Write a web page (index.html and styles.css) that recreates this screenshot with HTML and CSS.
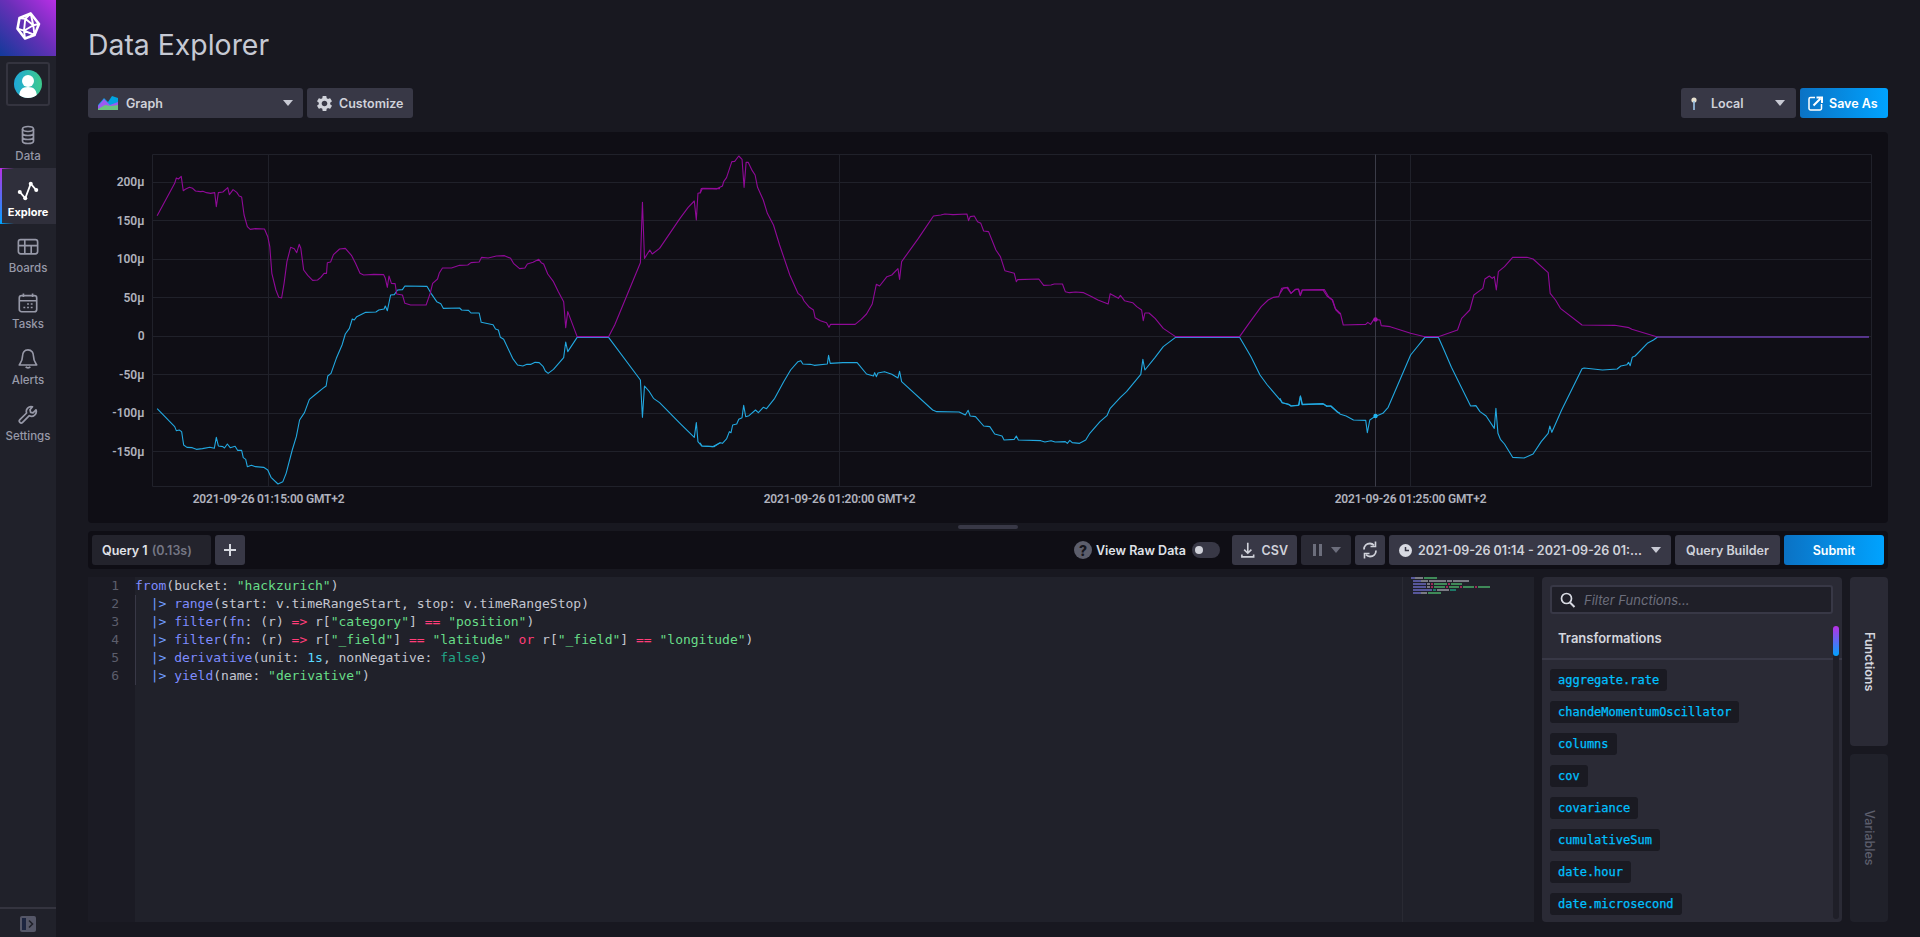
FILE: index.html
```html
<!DOCTYPE html>
<html lang="en">
<head>
<meta charset="utf-8">
<title>Data Explorer</title>
<link rel="stylesheet" href="styles.css">
</head>
<body>
<nav class="sidebar">
  <div class="logo">
    <svg class="logo-mark" width="36" height="36" viewBox="0 0 36 36" fill="none" stroke="#fff" stroke-width="2" stroke-linejoin="round"><path d="M9.500 10 20.700 5.500 29 16 24.500 27 15 30.500 7.500 20.700Z" stroke-width="2.600"/><path d="M15.300 10.700 23.300 17.300 14 22.700ZM9.500 10 15.300 10.700 20.700 5.500 23.300 17.300 29 16M23.300 17.300 24.500 27 14 22.700 15 30.500M14 22.700 7.500 20.700" stroke-width="1.900"/></svg>
  </div>
  <div class="avatar-box">
    <div class="avatar"><svg width="28" height="28" viewBox="0 0 28 28"><circle cx="14" cy="11" r="6" fill="#fff"/><path d="M5 28c0-8 3-11 9-11s9 3 9 11Z" fill="#fff"/></svg></div>
  </div>
  <a class="nav-item">
    <svg class="nav-icon" viewBox="0 0 20 20" fill="none" stroke="currentColor" stroke-width="1.700"><ellipse cx="10" cy="4" rx="5.500" ry="2.500"/><path d="M4.500 4v12c0 1.400 2.500 2.500 5.500 2.500s5.500-1.100 5.500-2.500V4M4.500 8c0 1.400 2.500 2.500 5.500 2.500S15.500 9.400 15.500 8M4.500 12c0 1.400 2.500 2.500 5.500 2.500s5.500-1.100 5.500-2.500"/></svg>
    <span>Data</span>
  </a>
  <a class="nav-item active">
    <svg class="nav-icon big" viewBox="0 0 24 24" fill="none" stroke="#fff" stroke-width="2"><path d="M3 13 9 20 15 4 21 11"/><g fill="#fff" stroke="none"><circle cx="3" cy="13" r="2.200"/><circle cx="9" cy="20" r="2.200"/><circle cx="15" cy="4" r="2.200"/><circle cx="21" cy="11" r="2.200"/></g></svg>
    <span>Explore</span>
  </a>
  <a class="nav-item">
    <svg class="nav-icon big" viewBox="0 0 24 24" fill="none" stroke="currentColor" stroke-width="1.800"><rect x="1.500" y="4" width="21" height="15.500" rx="2.500"/><path d="M1.500 10.500h21M8.500 4v15.500M15.500 10.500v9"/></svg>
    <span>Boards</span>
  </a>
  <a class="nav-item">
    <svg class="nav-icon big" viewBox="0 0 24 24" fill="none" stroke="currentColor" stroke-width="1.800"><rect x="2.500" y="4" width="19" height="17.500" rx="2.500"/><path d="M2.500 9.500h19M7 1.500v4M17 1.500v4"/><path d="M11 13h2M15 13h2M7 17h2M11 17h2M15 17h2" stroke-width="1.600"/></svg>
    <span>Tasks</span>
  </a>
  <a class="nav-item">
    <svg class="nav-icon big" viewBox="0 0 24 24" fill="none" stroke="currentColor" stroke-width="1.800"><path d="M12 2c-4 0-6 3.200-6 7 0 5-2 7-3.500 9.500h19C20 16 18 14 18 9c0-3.800-2-7-6-7Z" stroke-linejoin="round"/><path d="M9.500 20.500a2.800 2.200 0 0 0 5 0"/></svg>
    <span>Alerts</span>
  </a>
  <a class="nav-item">
    <svg class="nav-icon" viewBox="0 0 20 20" fill="none" stroke="currentColor" stroke-width="1.700" stroke-linejoin="round"><path d="M14.500 1.800A4.800 4.800 0 0 0 8.600 8L1.900 14.700a1.900 1.900 0 0 0 2.700 2.700L11.300 10.700A4.800 4.800 0 0 0 18 4.800L15 7.800 12.600 7.300 12 4.800Z"/></svg>
    <span>Settings</span>
  </a>
  <div class="sidebar-foot">
    <svg width="16" height="16" viewBox="0 0 16 16"><rect width="16" height="16" rx="2" fill="#555768"/><rect x="2" y="2" width="4" height="12" fill="#1c2540"/><path d="M9 4.500 12.500 8 9 11.500" fill="none" stroke="#20212a" stroke-width="1.600"/></svg>
  </div>
</nav>

<main class="main">
  <header class="page-header"><h1 class="title">Data Explorer</h1></header>

  <div class="toolbar">
    <div class="btn graph-select">
      <svg width="20" height="14" viewBox="0 0 20 14"><path d="M0 9 6 2 10 6 14 0 20 2V14H0Z" fill="#00a3e0"/><path d="M0 10 6 3 12 9 20 6V14H0Z" fill="#9c5bf0"/><path d="M0 13 7 9 13 10 20 9V14H0Z" fill="#6ac47f"/></svg>
      <span class="grow">Graph</span>
      <i class="caret"></i>
    </div>
    <div class="btn customize">
      <svg width="19" height="19" viewBox="0 0 24 24" fill="currentColor"><path d="M19.140 12.940c.04-.3.06-.61.06-.94 0-.32-.02-.64-.07-.94l2.030-1.580a.49.49 0 0 0 .12-.61l-1.920-3.320a.488.488 0 0 0-.59-.22l-2.390.96c-.5-.38-1.030-.7-1.620-.94l-.36-2.540a.484.484 0 0 0-.48-.41h-3.840c-.24 0-.43.17-.47.41l-.36 2.540c-.59.24-1.130.57-1.620.94l-2.390-.96c-.22-.08-.47 0-.59.22L2.740 8.870c-.12.21-.08.47.12.61l2.030 1.580c-.05.3-.09.63-.09.94s.02.64.07.94l-2.030 1.580a.49.49 0 0 0-.12.61l1.920 3.320c.12.22.37.29.59.22l2.390-.96c.5.38 1.030.7 1.620.94l.36 2.540c.05.24.24.41.48.41h3.840c.24 0 .44-.17.47-.41l.36-2.540c.59-.24 1.130-.56 1.620-.94l2.390.96c.22.08.47 0 .59-.22l1.920-3.320c.12-.22.07-.47-.12-.61l-2.010-1.580zM12 15.600c-1.980 0-3.600-1.620-3.600-3.600s1.620-3.600 3.600-3.600 3.600 1.620 3.600 3.600-1.620 3.600-3.600 3.600z"/></svg>
      <span>Customize</span>
    </div>
    <div class="spacer"></div>
    <div class="btn local">
      <svg width="6" height="13" viewBox="0 0 6 13"><circle cx="3" cy="3" r="2.600" fill="#e8e2d0"/><rect x="2.200" y="4" width="1.600" height="9" fill="#9cc4e8"/></svg>
      <span class="grow">Local</span>
      <i class="caret"></i>
    </div>
    <div class="btn primary save-as">
      <svg width="15" height="15" viewBox="0 0 15 15" fill="none" stroke="#fff" stroke-width="1.500"><path d="M7 1.500H2.500a1.500 1.500 0 0 0-1.500 1.500v9.500a1.500 1.500 0 0 0 1.500 1.500H12a1.500 1.500 0 0 0 1.500-1.500V8"/><path d="M5.500 9.500 12.500 2.500M8.500 1.500h5.500v5.500" stroke-width="2"/></svg>
      <span>Save As</span>
    </div>
  </div>

  <section class="chart-panel">
    <svg class="chart" width="1800" height="391" viewBox="0 0 1800 391">
      <g class="grid">
        <path d="M64.500 22.500H1783.500V354.500H64.500Z"/>
        <path d="M64.500 50.500H1783.500M64.500 88.500H1783.500M64.500 127.500H1783.500M64.500 165.500H1783.500M64.500 204.500H1783.500M64.500 242.500H1783.500M64.500 281.500H1783.500M64.500 319.500H1783.500"/>
        <path d="M180.500 22.500V354.500M751.500 22.500V354.500M1322.500 22.500V354.500"/>
      </g>
      <path class="crosshair" d="M1287.500 22.500V354.500"/>
      <g class="ylabels">
        <text x="56.500" y="50">200µ</text>
        <text x="56.500" y="88.500">150µ</text>
        <text x="56.500" y="127">100µ</text>
        <text x="56.500" y="165.500">50µ</text>
        <text x="56.500" y="204">0</text>
        <text x="56.500" y="242.500">-50µ</text>
        <text x="56.500" y="281">-100µ</text>
        <text x="56.500" y="319.500">-150µ</text>
      </g>
      <g class="xlabels">
        <text x="180.500" y="367">2021-09-26 01:15:00 GMT+2</text>
        <text x="751.500" y="367">2021-09-26 01:20:00 GMT+2</text>
        <text x="1322.500" y="367">2021-09-26 01:25:00 GMT+2</text>
      </g>
      <g class="series-c">
        <path transform="translate(-8,-2) scale(.40816,.33333)" d="M189 836 232 890 236 902 243 900 249 905 254 945 262 952 275 953 285 958 300 956 318 952 329 955 334 922 339 948 350 950 354 954 361 942 368 953 380 949 386 961 396 961 400 983 406 988 410 1010 420 1006 430 1010 450 1012 460 1020 468 1042 485 1062 497 1055 505 1030 520 960 530 920 538 870 550 848 562 808 575 795 595 775 603 768 607 738 615 730 628 685 642 645 650 612 660 595 667 567 672 570 678 560 700 547 725 546 732 540 745 537 748 528 753 542 761 495 770 494 778 480 790 479 796 468 850 469 860 490 874 515 884 521 890 535 930 534 935 540 952 541 958 549 978 549 983 577 1012 584 1018 597 1025 600 1030 622 1038 628 1060 685 1072 705 1085 708 1095 703 1105 703 1115 697 1125 698 1135 710 1140 723 1147 730 1160 718 1185 683 1190 636 1195 665 1218 622 1295 622 1373 750 1378 862 1383 768 1395 785 1405 805 1420 818 1470 880 1505 922 1510 878 1514 935 1523 948 1550 950 1568 938"/>
        <path transform="translate(612,-2) scale(.40816,.33333)" d="M0 938 5 948 35 950 50 938 55 940 65 927 72 905 76 908 80 885 90 882 95 868 103 863 107 826 112 860 120 857 136 840 143 848 155 832 163 836 183 805 205 755 222 720 240 695 247 692 252 702 270 703 280 706 312 702 315 676 319 700 350 698 385 698 408 732 425 738 428 728 432 740 436 729 452 725 470 733 485 744 489 724 494 755 570 840 580 845 635 846 650 855 657 841 662 858 675 860 695 888 710 890 722 912 740 918 745 930 770 928 775 918 780 930 835 932 845 936 860 932 870 936 895 935 900 940 906 931 912 938 930 940 945 930 955 910 980 875 997 857 1005 835 1030 802 1045 785 1080 733 1085 688 1090 720 1115 682 1135 650 1165 622 1322 622 1350 680 1372 735 1390 765 1427 818 1445 825 1448 828 1466 826 1471 798 1475 824 1528 822 1535 829 1545 828 1560 845 1568 850"/>
        <path transform="translate(1192,-2) scale(.40816,.33333)" d="M0 805 5 818 20 822 27 828 47 825 50 798 55 823 105 821 115 828 125 828 148 853 162 858 180 870 210 871 214 908 220 870 232 860 252 850 265 832 285 775 320 675 355 622 388 622 400 655 420 712 467 828 480 827 490 845 505 858 525 895 529 835 534 910 540 928 550 942 570 982 598 984 620 972 640 935 657 910 661 888 666 907 690 840 740 716 745 714 790 720 826 717 835 708 850 704 854 697 858 707 863 682 870 678 900 640 915 630 925 621 1443 621"/>
      </g>
      <g class="series-p">
        <path transform="translate(-8,-2) scale(.40816,.33333)" d="M189 257 232 160 236 144 241 147 248 139 253 182 258 178 268 172 276 175 283 183 295 185 301 184 310 188 320 190 330 188 334 230 339 188 350 186 362 173 366 194 375 179 384 187 390 198 396 201 402 255 410 290 417 298 430 296 452 297 460 320 465 350 470 430 480 480 487 502 494 504 500 460 507 395 516 352 525 356 531 368 537 343 541 355 548 420 558 436 570 451 582 450 590 442 598 430 604 430 606 398 614 396 621 374 636 357 650 355 665 376 675 400 686 430 695 435 720 433 744 434 748 445 753 472 757 438 763 460 772 461 776 492 790 495 796 520 810 525 848 525 858 490 864 460 876 447 880 430 888 414 910 414 930 406 950 405 958 398 978 396 984 382 1000 384 1020 378 1040 377 1055 385 1062 400 1077 416 1090 414 1096 402 1110 397 1124 388 1130 398 1136 402 1146 432 1160 455 1172 485 1185 515 1190 593 1195 545 1218 620 1295 620 1310 585 1373 398 1378 217 1383 385 1396 360 1402 372 1420 355 1435 328 1470 265 1490 232 1505 213 1510 270 1514 190 1520 188 1525 175 1568 176"/>
        <path transform="translate(612,-2) scale(.40816,.33333)" d="M0 190 3 176 30 176 40 177 55 168 58 155 65 143 78 95 85 94 95 78 103 88 108 172 113 97 118 97 128 122 135 135 141 172 155 210 165 250 180 285 195 345 220 435 240 490 250 500 255 513 268 532 278 540 282 563 295 572 310 578 316 592 320 583 380 583 395 568 408 552 422 522 432 463 440 468 458 440 470 435 485 416 489 448 494 395 535 325 572 258 590 255 600 252 620 254 654 252 658 272 662 260 672 258 680 275 688 280 695 303 707 305 725 360 736 380 747 422 770 430 775 455 778 449 830 447 842 466 860 465 868 462 888 462 895 485 905 488 920 486 940 488 960 500 975 510 1000 522 1005 491 1025 505 1030 496 1040 512 1060 518 1070 530 1082 540 1086 572 1090 549 1100 549 1115 565 1135 595 1165 620 1322 620 1345 580 1375 530 1392 510 1405 502 1418 500 1425 475 1440 472 1448 490 1460 478 1466 477 1470 495 1475 480 1530 479 1540 500 1550 510 1558 540 1568 552"/>
        <path transform="translate(1192,-2) scale(.40816,.33333)" d="M0 490 8 475 17 473 27 490 37 478 46 478 50 497 55 480 105 479 115 498 128 510 135 535 148 550 155 585 210 583 215 577 222 583 230 568 245 570 248 587 270 590 320 610 355 620 388 620 435 600 445 565 465 540 475 495 497 475 502 447 513 438 520 445 525 440 530 480 535 425 550 410 570 382 605 382 620 387 657 428 662 490 675 510 687 535 740 585 820 586 855 593 862 598 925 621 1443 621"/>
      </g>
      <circle class="dot-p" cx="1287.500" cy="187.500" r="2.200"/>
      <circle class="dot-c" cx="1287.500" cy="284" r="2.200"/>
    </svg>
  </section>

  <div class="resizer"><span class="grip"></span></div>

  <div class="query-bar">
    <div class="tab"><b>Query 1</b> <span class="muted">(0.13s)</span></div>
    <div class="btn square plus">
      <svg width="14" height="14" viewBox="0 0 14 14"><path d="M7 1v12M1 7h12" stroke="#d8dae2" stroke-width="2"/></svg>
    </div>
    <div class="spacer"></div>
    <div class="help">?</div>
    <span class="raw-label">View Raw Data</span>
    <div class="toggle"><i></i></div>
    <div class="btn csv">
      <svg width="15" height="17" viewBox="0 0 15 17" fill="none" stroke="currentColor" stroke-width="1.800"><path d="M7.500 0v11M3.500 7.500l4 4 4-4M1 13v2.500h13V13"/></svg>
      <span>CSV</span>
    </div>
    <div class="btn pause">
      <svg width="9" height="12" viewBox="0 0 9 12" fill="currentColor"><rect width="3" height="12"/><rect x="6" width="3" height="12"/></svg>
      <i class="caret"></i>
    </div>
    <div class="btn refresh">
      <svg width="16" height="18" viewBox="0 0 16 18" fill="none" stroke="currentColor" stroke-width="1.800"><path d="M2 8.500C2 5 4.500 2.500 8 2.500c1.800 0 3 .7 4 1.800M14 9.500c0 3.500-2.500 6-6 6-1.800 0-3-.7-4-1.800"/><path d="M13.500 0.500V5.500H8.500M2.500 17.500V12.500H7.500" stroke-width="1.600"/></svg>
    </div>
    <div class="btn time">
      <svg width="13" height="13" viewBox="0 0 13 13"><circle cx="6.500" cy="6.500" r="6.500" fill="#d8dae2"/><path d="M6.500 3v3.500H10" fill="none" stroke="#383846" stroke-width="1.500"/></svg>
      <span class="time-text">2021-09-26 01:14 - 2021-09-26 01:...</span>
      <i class="caret"></i>
    </div>
    <div class="btn builder">Query Builder</div>
    <div class="btn primary submit">Submit</div>
  </div>

  <div class="workspace">
    <div class="editor">
      <div class="gutter">
        <div>1</div><div>2</div><div>3</div><div>4</div><div>5</div><div>6</div>
      </div>
      <div class="code">
        <div class="ln"><span class="fn">from</span>(bucket: <span class="str">"hackzurich"</span>)</div>
        <div class="guided">
          <div class="ln">  <span class="pipe">|&gt;</span> <span class="fn">range</span>(start: v.timeRangeStart, stop: v.timeRangeStop)</div>
          <div class="ln">  <span class="pipe">|&gt;</span> <span class="fn">filter</span>(<span class="fn">fn</span>: (r) <span class="op">=&gt;</span> r[<span class="str">"category"</span>] <span class="op">==</span> <span class="str">"position"</span>)</div>
          <div class="ln">  <span class="pipe">|&gt;</span> <span class="fn">filter</span>(<span class="fn">fn</span>: (r) <span class="op">=&gt;</span> r[<span class="str">"_field"</span>] <span class="op">==</span> <span class="str">"latitude"</span> <span class="op">or</span> r[<span class="str">"_field"</span>] <span class="op">==</span> <span class="str">"longitude"</span>)</div>
          <div class="ln">  <span class="pipe">|&gt;</span> <span class="fn">derivative</span>(unit: <span class="num">1s</span>, nonNegative: <span class="bool">false</span>)</div>
          <div class="ln">  <span class="pipe">|&gt;</span> <span class="fn">yield</span>(name: <span class="str">"derivative"</span>)</div>
        </div>
      </div>
      <div class="minimap">
        <div class="mrow"><i class="mp" style="width:4px"></i><i class="mg" style="width:8px"></i><i class="ms gap" style="width:13px"></i></div>
        <div class="mrow in"><i class="mp" style="width:8px"></i><i class="mg" style="width:7px"></i><i class="mg gap" style="width:17px"></i><i class="mg gap" style="width:5px"></i><i class="mg gap" style="width:16px"></i></div>
        <div class="mrow in"><i class="mp" style="width:13px"></i><i class="mg gap" style="width:3px"></i><i class="mk gap" style="width:2px"></i><i class="ms gap" style="width:13px"></i><i class="mk gap" style="width:2px"></i><i class="ms gap" style="width:11px"></i></div>
        <div class="mrow in"><i class="mp" style="width:13px"></i><i class="mg gap" style="width:3px"></i><i class="mk gap" style="width:2px"></i><i class="ms gap" style="width:11px"></i><i class="mk gap" style="width:2px"></i><i class="ms gap" style="width:10px"></i><i class="mk gap" style="width:2px"></i><i class="ms gap" style="width:11px"></i><i class="mk gap" style="width:2px"></i><i class="ms gap" style="width:12px"></i></div>
        <div class="mrow in"><i class="mp" style="width:19px"></i><i class="mt gap" style="width:3px"></i><i class="mg gap" style="width:12px"></i><i class="mt gap" style="width:6px"></i></div>
        <div class="mrow in"><i class="mp" style="width:8px"></i><i class="mg" style="width:6px"></i><i class="ms gap" style="width:13px"></i></div>
      </div>
    </div>

    <aside class="functions">
      <div class="search">
        <svg width="16" height="16" viewBox="0 0 16 16" fill="none" stroke="#d8dae2" stroke-width="1.700"><circle cx="6.500" cy="6.500" r="5"/><path d="M10 10.500 14.500 15" stroke-width="2"/></svg>
        <span>Filter Functions...</span>
      </div>
      <div class="fn-head">Transformations</div>
      <div class="fn-list">
        <span class="chip">aggregate.rate</span>
        <span class="chip">chandeMomentumOscillator</span>
        <span class="chip">columns</span>
        <span class="chip">cov</span>
        <span class="chip">covariance</span>
        <span class="chip">cumulativeSum</span>
        <span class="chip">date.hour</span>
        <span class="chip">date.microsecond</span>
      </div>
      <div class="scrolltrack"><i></i></div>
    </aside>

    <div class="side-tabs">
      <div class="side-tab on"><span>Functions</span></div>
      <div class="side-tab"><span>Variables</span></div>
    </div>
  </div>
</main>
</body>
</html>
```
FILE: styles.css
```css
* { box-sizing: border-box; }
html, body { height: 100%; }
body {
  margin: 0;
  display: flex;
  height: 937px;
  overflow: hidden;
  background: #181820;
  font-family: Inter, "Noto Sans", sans-serif;
  font-size: 13px;
  color: #c8cad4;
}

/* Sidebar */
.sidebar {
  width: 56px;
  flex: none;
  display: flex;
  flex-direction: column;
  background: #20212a;
}
.logo {
  height: 56px;
  background: linear-gradient(45deg, #123a9a 0%, #6a2fb8 55%, #b92fe6 100%);
  padding: 8px 10px;
}
.logo-mark { display: block; }
.avatar-box {
  width: 44px;
  height: 44px;
  margin: 6px;
  border: 2px solid #34343f;
  border-radius: 3px;
  display: flex;
  align-items: center;
  justify-content: center;
}
.avatar {
  width: 28px;
  height: 28px;
  border-radius: 50%;
  overflow: hidden;
  background: linear-gradient(90deg, #1fa8d8, #3dca8c);
}
.avatar svg { display: block; }
.nav-item {
  height: 56px;
  padding-top: 13px;
  display: flex;
  flex-direction: column;
  align-items: center;
  gap: 3px;
  font-size: 11.500px;
  line-height: 16px;
  font-weight: 500;
  color: #9799a8;
}
.nav-icon { width: 20px; height: 20px; display: block; }
.nav-icon.big { width: 22px; height: 22px; margin: -1px 0; }
.nav-item.active {
  color: #fff;
  font-weight: 700;
  font-size: 11px;
  position: relative;
  background:
    linear-gradient(90deg, #b92fe6, transparent) top left / 14px 1px no-repeat,
    linear-gradient(90deg, #00a3ff, transparent) bottom left / 14px 1px no-repeat,
    #2f2f3b;
}
.nav-item.active::before {
  content: "";
  position: absolute;
  left: 0; top: 0; bottom: 0;
  width: 2px;
  background: linear-gradient(180deg, #b92fe6, #00a3ff);
}
.sidebar-foot {
  margin-top: auto;
  height: 30px;
  border-top: 2px solid #34343f;
  display: flex;
  justify-content: center;
  padding-top: 7px;
}

/* Main */
.main {
  flex: 1;
  min-width: 0;
  padding: 0 32px 15px;
  display: flex;
  flex-direction: column;
}
.page-header { height: 88px; display: flex; align-items: center; flex: none; }
.title {
  margin: 0;
  font-size: 28.400px;
  font-weight: 400;
  color: #c6c9d3;
}
.toolbar { display: flex; gap: 4px; height: 30px; margin-bottom: 14px; flex: none; }
.spacer { flex: 1; }
.btn {
  height: 30px;
  flex: none;
  display: flex;
  align-items: center;
  background: #383846;
  border-radius: 3px;
  color: #d0d2da;
  font-size: 12.500px;
  font-weight: 600;
  white-space: nowrap;
}
.grow { flex: 1; }
.caret {
  width: 0; height: 0;
  flex: none;
  border-left: 5px solid transparent;
  border-right: 5px solid transparent;
  border-top: 6px solid #c8cad4;
}
.graph-select { width: 215px; padding: 0 10px; gap: 8px; }
.customize { width: 106px; padding: 0 8px; gap: 5px; }
.local { width: 115px; padding: 0 11px 0 10px; gap: 14px; }
.primary {
  background: linear-gradient(90deg, #0b72c4, #00a3ff);
  color: #fff;
  font-weight: 600;
}
.save-as { width: 88px; padding: 0 8px; gap: 6px; }

/* Chart */
.chart-panel { height: 391px; background: #0f0e15; border-radius: 4px; flex: none; }
.chart { display: block; }
.grid path { fill: none; stroke: #20212a; stroke-width: 1; }
.crosshair { stroke: #3b3c48; stroke-width: 1; fill: none; }
.ylabels text, .xlabels text {
  fill: #b0b2bd;
  font-family: Roboto, Inter, sans-serif;
  font-size: 12px;
  font-weight: 600;
  dominant-baseline: central;
}
.ylabels text { text-anchor: end; }
.xlabels text { text-anchor: middle; letter-spacing: -0.2px; }
.series-c path, .series-p path {
  fill: none;
  stroke-width: 1.100;
  vector-effect: non-scaling-stroke;
  stroke-linejoin: round;
}
.series-c path { stroke: #22a8e0; }
.series-p path { stroke: #900a98; }
.dot-p { fill: #a010a8; }
.dot-c { fill: #22b4f0; }

.resizer { height: 8px; flex: none; display: flex; justify-content: center; align-items: center; }
.grip { width: 60px; height: 4px; border-radius: 2px; background: #383846; }

/* Query bar */
.query-bar {
  height: 38px;
  flex: none;
  background: #0f0e15;
  border-radius: 4px;
  padding: 4px;
  display: flex;
  align-items: center;
  gap: 4px;
  margin-bottom: 8px;
}
.tab {
  width: 119px;
  height: 30px;
  background: #23232c;
  border-radius: 3px;
  display: flex;
  align-items: center;
  gap: 4px;
  padding-left: 10px;
  font-size: 12.500px;
  white-space: nowrap;
}
.tab b { font-weight: 600; color: #e0e2e8; }
.muted { color: #757784; font-weight: 600; }
.square { width: 30px; justify-content: center; }
.help {
  width: 18px; height: 18px;
  border-radius: 50%;
  background: #5c5e6c;
  color: #15151c;
  font-weight: 800;
  font-size: 14px;
  display: flex;
  align-items: center;
  justify-content: center;
}
.raw-label { color: #dfe1e8; font-weight: 600; font-size: 12.500px; width: 92px; white-space: nowrap; text-align: left; }
.toggle {
  width: 28px; height: 16px;
  border-radius: 8px;
  background: #383846;
  display: flex;
  align-items: center;
  padding-left: 3px;
  margin-right: 8px;
}
.toggle i { width: 8px; height: 8px; border-radius: 50%; background: #d0d2da; }
.csv { width: 65px; padding: 0 9px; gap: 7px; }
.pause { width: 50px; padding: 0 9px 0 12px; gap: 9px; color: #6c6e7c; background: #2a2a35; }
.pause .caret { border-top-color: #6c6e7c; }
.refresh { width: 30px; justify-content: center; }
.time { width: 282px; padding: 0 10px; gap: 6px; }
.time-text { flex: 1; min-width: 0; }
.builder { width: 105px; justify-content: center; }
.submit { width: 100px; justify-content: center; }

/* Workspace */
.workspace { flex: 1; min-height: 0; display: flex; gap: 8px; }
.editor {
  width: 1446px;
  background: #20212a;
  display: flex;
  position: relative;
  font-family: "DejaVu Sans Mono", "Liberation Mono", monospace;
  font-size: 13px;
  line-height: 18px;
  color: #c4c6d0;
}
.gutter {
  width: 47px;
  flex: none;
  background: #1b1b24;
  color: #5c5e6c;
  text-align: right;
  padding-right: 16px;
}
.code { flex: 1; }
.ln { white-space: pre; height: 18px; }
.guided { box-shadow: inset 1px 0 0 #383846; }
.fn { color: #7f8cff; }
.pipe { color: #6f9cff; }
.str { color: #68dd88; }
.op { color: #ff3d78; }
.num { color: #58d8ff; }
.bool { color: #22a588; }
.minimap {
  position: absolute;
  top: 0; right: 0; bottom: 0;
  width: 132px;
  padding-left: 8px;
  border-left: 1px solid #292a33;
}
.mrow { display: flex; height: 3px; }
.mrow.in { padding-left: 2px; }
.mrow i { height: 2px; display: block; }
.mrow .gap { margin-left: 1px; }
.mp { background: #57579a; }
.mg { background: #7a7b84; }
.ms { background: #3f8a58; }
.mk { background: #9a2a58; }
.mt { background: #1d7a68; }

/* Functions */
.functions {
  width: 300px;
  background: #2a2a35;
  border-radius: 4px;
  position: relative;
  display: flex;
  flex-direction: column;
  overflow: hidden;
}
.search {
  margin: 8px 9px 0 8px;
  height: 29px;
  flex: none;
  background: #1f1f28;
  border: 2px solid #383846;
  border-radius: 3px;
  display: flex;
  align-items: center;
  gap: 8px;
  padding-left: 8px;
  color: #6c6e7c;
  font-style: italic;
  font-size: 13px;
}
.fn-head {
  height: 46px;
  flex: none;
  border-bottom: 2px solid #383846;
  padding: 4px 16px 0;
  display: flex;
  align-items: center;
  color: #d4d6de;
  font-weight: 600;
  font-size: 13px;
}
.fn-list {
  padding: 9px 8px;
  display: flex;
  flex-direction: column;
  align-items: flex-start;
  gap: 10px;
}
.chip {
  height: 22px;
  padding: 0 8px;
  background: #1a1a22;
  border-radius: 3px;
  font-family: "DejaVu Sans Mono", "Liberation Mono", monospace;
  font-size: 12px;
  line-height: 22px;
  color: #00c0ff;
  -webkit-text-stroke: 0.25px #00c0ff;
}
.scrolltrack {
  position: absolute;
  top: 49px; bottom: 3px; left: 291px;
  width: 6px;
  border-radius: 3px;
  background: #1f1f28;
}
.scrolltrack i {
  display: block;
  height: 30px;
  border-radius: 3px;
  background: linear-gradient(180deg, #b92fe6, #00a3ff);
}
.side-tabs { width: 38px; display: flex; flex-direction: column; gap: 8px; }
.side-tab {
  flex: 1;
  border-radius: 4px;
  background: #20212a;
  display: flex;
  align-items: center;
  justify-content: center;
  color: #5c5e6c;
  font-weight: 500;
  font-size: 12.500px;
}
.side-tab.on { background: #2a2a35; color: #d4d6de; font-weight: 600; }
.side-tab span { writing-mode: vertical-rl; }
```
